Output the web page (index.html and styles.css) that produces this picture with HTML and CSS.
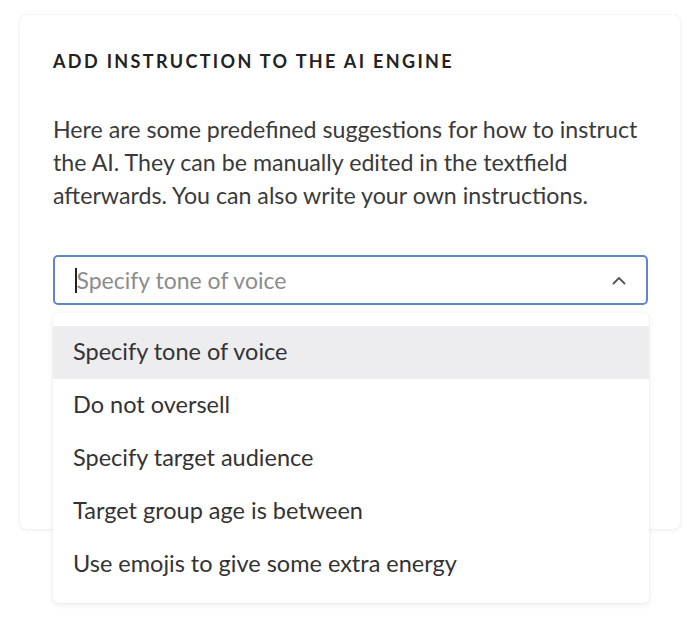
FILE: index.html
```html
<!DOCTYPE html>
<html lang="en">
<head>
<meta charset="utf-8">
<title>Add instruction</title>
<link rel="stylesheet" href="styles.css">
</head>
<body>
<div class="page">
  <section class="card">
    <h2 class="card-title">ADD INSTRUCTION TO THE AI ENGINE</h2>
    <p class="card-text">Here are some predefined suggestions for how to instruct the AI. They can be manually edited in the textfield afterwards. You can also write your own instructions.</p>
    <div class="select">
      <div class="select-field">
        <span class="caret"></span>
        <span class="placeholder">Specify tone of voice</span>
        <svg class="chevron" width="14" height="9" viewBox="0 0 14 9" aria-hidden="true">
          <path d="M1.5 7.5 L7 2 L12.5 7.5" fill="none" stroke="#555" stroke-width="1.8" stroke-linecap="round" stroke-linejoin="round"/>
        </svg>
      </div>
      <ul class="menu">
        <li class="menu-item is-active">Specify tone of voice</li>
        <li class="menu-item">Do not oversell</li>
        <li class="menu-item">Specify target audience</li>
        <li class="menu-item">Target group age is between</li>
        <li class="menu-item">Use emojis to give some extra energy</li>
      </ul>
    </div>
  </section>
</div>
</body>
</html>
```

FILE: styles.css
```css
* { box-sizing: border-box; }
html, body { margin: 0; padding: 0; background: #ffffff; }
body { font-family: Lato, "Open Sans", sans-serif; color: #333; }

.page { padding: 15px 20px; min-height: 629px; }

.card {
  width: 660px;
  background: #fff;
  border-radius: 6px;
  box-shadow: 0 0 1px rgba(0,0,0,0.12), 0 1px 5px rgba(0,0,0,0.07);
  padding: 34px 32px 224px 33px;
}

.card-title {
  margin: 0;
  font-size: 18px;
  line-height: 24px;
  font-weight: 700;
  letter-spacing: 2.35px;
  color: #222;
}

.card-text {
  margin: 40px 0 0;
  font-size: 23.2px;
  line-height: 33px;
  color: #3a3a3a;
}

.select { position: relative; margin-top: 43px; }

.select-field {
  height: 50px;
  border: 2px solid #5f87c6;
  border-radius: 5px;
  display: flex;
  align-items: center;
  padding: 0 20px 0 20px;
}

.caret {
  width: 1.5px;
  height: 25px;
  background: #222;
}

.placeholder {
  flex: 1;
  font-size: 23px;
  color: #8c8c8c;
}

.chevron { margin-right: 0; }

.menu {
  position: absolute;
  top: calc(100% + 8px);
  left: 0;
  right: -1px;
  margin: 0;
  padding: 13px 0 12px;
  list-style: none;
  background: #fff;
  border-radius: 5px;
  box-shadow: 0 0 1px rgba(0,0,0,0.14), 0 2px 6px rgba(0,0,0,0.08);
  z-index: 2;
}

.menu-item {
  font-size: 23.5px;
  line-height: 32px;
  padding: 9px 20px 12px;
  color: #333;
}
.menu-item.is-active { background: #ededf0; }
```
